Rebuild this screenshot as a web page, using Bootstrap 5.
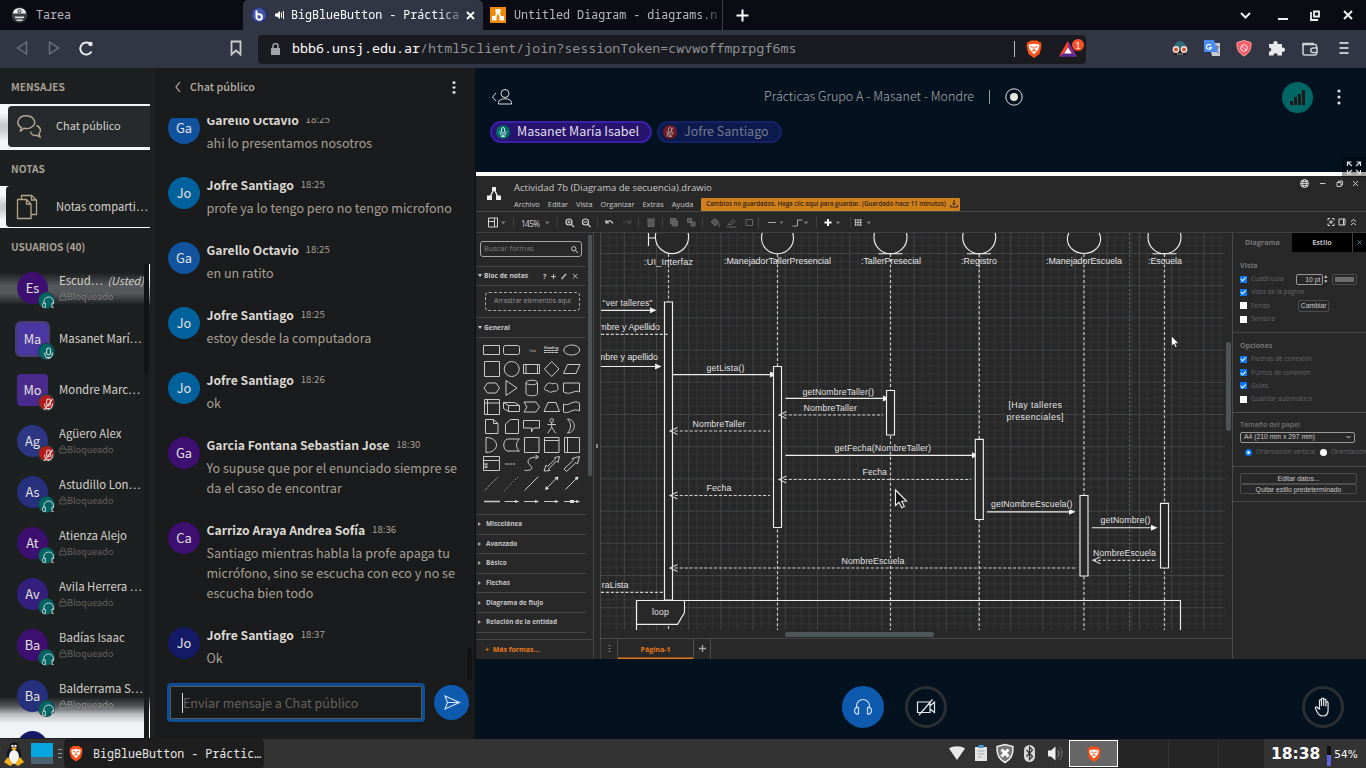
<!DOCTYPE html>
<html lang="es" data-bs-theme="dark">
<head>
<meta charset="utf-8">
<title>BigBlueButton - Prácticas Grupo A</title>
<link rel="stylesheet" href="https://cdn.jsdelivr.net/npm/bootstrap@5.3.0/dist/css/bootstrap.min.css">
<script src="https://cdn.jsdelivr.net/npm/bootstrap@5.3.0/dist/js/bootstrap.bundle.min.js"></script>
<style>
html,body{height:100%;overflow:hidden}
body{width:1366px;height:768px;background:#04111f;font-family:"Noto Sans CJK SC",sans-serif;color:#d5d2cc;font-size:13px;line-height:1.2}
svg{display:block;flex:none}
.mono{font-family:"Noto Sans Mono","DejaVu Sans Mono",monospace}
.tabstrip{height:30px;background:#0b0b14;font-size:11.7px;color:#b9bac0}
.tab-a{width:243px;padding-left:11px;gap:8px}
.tab-b{width:240px;background:#323543;color:#fff;padding-left:8px;border-radius:5px 5px 0 0}
.tab-c{width:239px;padding-left:7px}
.clip{overflow:hidden;white-space:nowrap}
.tabstrip span{margin-bottom:1px}
.fade-b{width:171px;-webkit-mask:linear-gradient(90deg,#000 86%,rgba(0,0,0,.2))}
.fade-c{width:206px;-webkit-mask:linear-gradient(90deg,#000 90%,rgba(0,0,0,.2))}
.navrow{height:38px;background:#323543}
.urlbox{width:828px;height:29px;margin-left:15px;background:#191b20;border-radius:4px;color:#8f9196;font-size:13.35px;padding:0 1px 0 13px}
.urlbox b{font-weight:400;color:#fff}
.urltxt{margin:0 0 2px 12px}
.content{height:671px}
.users{width:155px;background:#1d2021}
.sec{font-weight:700;font-size:10.2px;color:#a8a095;padding-left:11px;line-height:18px}
.glow{width:150px;background:linear-gradient(#f4f7fa 20%,#c9cbcd 45%,#c9cbcd 55%,#f4f7fa 82%)}
.pill{border-radius:4px 0 0 4px;font-size:11px;color:#d5d2cc}
.ulist{height:474px;width:150px;overflow:hidden}
.urow{height:51px;padding:8px 0 0 17px;gap:11px}
.av{width:31px;height:32px;border-radius:50%;font-size:12.8px;color:#e4e2de;flex:none}
.av.sq{border-radius:4px}
.dotb{position:absolute;left:22px;top:21px;width:15px;height:15px;border-radius:50%;background:#006464;box-shadow:0 0 0 1px #1c4248}
.dotb.rd{background:#b31c1c}
.nm{font-size:11.4px;line-height:17px;white-space:nowrap;margin-top:-7px}
.lk{font-size:9.1px;line-height:15px;color:#64615d}
.sbar{position:absolute;right:1px;top:0;width:5px;height:474px;background:#191b1c}
.sbar i{display:block;height:110px;background:#121314;border-radius:3px}
.edge{position:absolute;right:0;top:0;width:1px;height:474px;background:linear-gradient(#fff 0,#fff 3%,#777 7%,transparent 9%,transparent 91%,#fff 95%)}
.chat{width:320px;background:#1a1b1c}
.chead{height:50px;padding-top:10px}
.msgs{height:562px;overflow:hidden}
.mthumb{position:absolute;right:3px;top:530px;width:5px;height:34px;border-radius:3px;background:#111213}
.msg{padding:0 13px;gap:6.5px}
.msg .av{width:32px;margin-top:2px}
.who{font-weight:700;font-size:12.2px;line-height:20px;height:20px;color:#dcd9d3}
.who small{font-weight:400;font-size:9.7px;color:#a8a095;margin-left:4px;position:relative;top:-2px}
.txt{font-size:12.55px;line-height:20px;color:#a8a095;margin-top:3px;margin-bottom:22px;white-space:nowrap}
.minput{width:258px;height:39px;border:3px solid #0c4f97;border-radius:4px;box-shadow:inset 0 0 0 1px #5a5a58;color:#66625d;font-size:12.5px;padding-left:12px}
.send{width:35px;height:35px;border-radius:50%;background:#0d5aae}
.main{width:891px;background:#04111f;padding-left:1px}
.mtop{height:104px}
.talk{height:22px;border-radius:11px;border:2px solid #3b1fa8;background:#27146f;font-size:12.5px;line-height:16px;color:#e0dee8;padding:0 11px 0 4px;gap:7px}
.rnd{width:42px;height:42px;border-radius:50%;border:3px solid #2b2f32}
.dio{height:483px;background:#282829;font-family:"Open Sans",sans-serif;color:#c8c8c8;font-size:7.4px;line-height:12px}
.dio .ttl{height:36px;border-bottom:1px solid #444647}
.warn{background:#cf7f1c;color:#2f2113;width:259px;height:13px;font-size:6.15px;border-radius:1px;font-weight:600;padding-left:5px;white-space:nowrap}
.tools{height:21px;border-bottom:1px solid #3e4041}
.shapes{width:118px;border-right:1px solid #46494a}
.ln{border-top:1px solid #434546;width:110px}
.acc{height:19.6px;width:110px;border-top:1px solid #434546;font-weight:700;font-size:6.45px;color:#c4c4c4}
.acc:before{content:"";border:2.5px solid transparent;border-left:3px solid #aaa;border-right:0;margin:0 5px 0 2px}
.sbox{width:102px;height:16px;border:1px solid #a5a5a5;border-radius:3px;color:#7d7d7d;margin:8px 0 0 4px;padding:0 3px}
.rp{width:134px;border-left:1px solid #4a4e4f;color:#666667;font-size:6.5px}
.rp .r{height:13.35px;gap:4px;padding-left:7px}
.rp .h{font-weight:700;color:#747474;font-size:7px}
.ck{width:7px;height:7px;background:#fff;flex:none}
.ck.on{background:#0a78f0}
.ck.on:after{content:"";display:block;width:2.5px;height:4.5px;margin:.5px 0 0 2px;border:solid #fff;border-width:0 1px 1px 0;transform:rotate(45deg)}
.bt{border:1px solid #4c4c4c;border-radius:2px;color:#c8c8c8;font-family:"Liberation Sans",sans-serif;font-size:6.8px;text-align:center}
.mfoot{height:80px}
.task{height:29px;background:#333;font-size:11.7px;color:#e8e8e8}
</style>
</head>
<body>
<svg width="0" height="0" style="position:absolute">
<defs>
<symbol id="mic" viewBox="0 0 16 16"><g fill="none" stroke="currentColor" stroke-width="1.1"><rect x="6" y="2" width="4" height="7.5" rx="2"/><path d="M4 7v1.5a4 4 0 0 0 8 0V7M8 12.5V14M5.5 14h5"/></g></symbol>
<symbol id="mut" viewBox="0 0 16 16"><g fill="none" stroke="currentColor" stroke-width="1.1"><rect x="6" y="2" width="4" height="7.5" rx="2"/><path d="M4 7v1.5a4 4 0 0 0 8 0V7M8 12.5V14M5.5 14h5M3 14L12.500 2"/></g></symbol>
<symbol id="hp" viewBox="0 0 20 20"><g fill="none" stroke="currentColor" stroke-width="1.2"><path d="M3.500 11V9a6.500 6.500 0 0 1 13 0v2"/><path d="M5.500 10.500C2.500 10 1.500 12 1.500 13.500s1 4 4 3.500zM14.500 10.500c3-.5 4 1.500 4 3s-1 4-4 3.500z"/></g></symbol>
<symbol id="lock" viewBox="0 0 8 9"><g fill="none" stroke="currentColor" stroke-width=".9"><rect x=".8" y="4" width="6.200" height="4"/><path d="M2 4V2.800a1.900 1.900 0 0 1 3.800 0V4"/></g></symbol>
<symbol id="lion" viewBox="0 0 16 18"><path d="M4.500.5h7l1.500 1.500h1.500l1 3-.5 3.500L13.500 14 8 18 2.500 14 1 8.500.5 5 1.500 2H3z" fill="#fb5118"/><path d="M3.500 4l2 .3L8 3.700l2.500.6 2-.3 1 2-1.500 4-2 2L8 14.500 6 12 4 10 2.500 6z" fill="#fff"/><path d="M4.500 6.500l2.300.7M11.500 6.500l-2.300.7M8 7v3M6 11l2-1 2 1" stroke="#fb5118" stroke-width="1.100" fill="none"/></symbol>
<symbol id="dots" viewBox="0 0 4 16"><circle cx="2" cy="2" r="1.600"/><circle cx="2" cy="8" r="1.600"/><circle cx="2" cy="14" r="1.600"/></symbol>
</defs></svg>

<header class="tabstrip mono d-flex align-items-center">
  <div class="tab-a d-flex align-items-center">
    <svg width="17" height="16" viewBox="0 0 17 16"><circle cx="8.500" cy="8" r="7.800" fill="#3a3d42"/><path d="M2 6.500a6.500 5.500 0 0 1 13 0z" fill="#eee"/><circle cx="8.500" cy="4.200" r="2" fill="#444"/><circle cx="8.500" cy="4.200" r="1" fill="#eee"/><path d="M4 9.500h9v1.700H4zM5.500 12.500h6v1.500h-6z" fill="#ddd"/></svg>
    <span>Tarea</span>
  </div>
  <div class="tab-b h-100 d-flex align-items-center">
    <svg width="16" height="16" viewBox="0 0 16 16"><circle cx="8" cy="8" r="8" fill="#283274"/><circle cx="8" cy="8" r="6.800" fill="#4256a8"/><path d="M5.500 3.500v6.500a2.700 2.700 0 1 0 2.700-2.700H6" fill="none" stroke="#fff" stroke-width="2"/></svg>
    <svg class="ms-2" width="10" height="10" viewBox="0 0 10 10" fill="#fff"><path d="M0 3.500h2L5 1v8L2 6.500H0z"/><path d="M6.500 2.500v5M8.500 1v8" stroke="#fff"/></svg>
    <span class="clip fade-b" style="margin-left:6px">BigBlueButton - Práctica</span>
    <svg class="ms-1" width="9" height="9" viewBox="0 0 9 9"><path d="M1 1l7 7M8 1L1 8" stroke="#fff" stroke-width="1.800"/></svg>
  </div>
  <div class="tab-c d-flex align-items-center">
    <svg width="16" height="16" viewBox="0 0 16 16"><path fill="#f08705" d="M0 0h16v16H0z"/><path d="M8 5L4.500 11M8 5l3.500 6" stroke="#fff" stroke-width="1.500"/><path fill="#fff" d="M5.500 2h5v4h-5zM2 9h4.500v4.500H2zM9.500 9H14v4.500H9.500z"/></svg>
    <span class="clip fade-c ms-2">Untitled Diagram - diagrams.n</span>
  </div>
  <div class="border-start h-100" style="border-color:#3a3b44!important"></div>
  <svg style="margin-left:13px" width="13" height="13" viewBox="0 0 13 13"><path d="M6.500.5v12M.5 6.500h12" stroke="#fff" stroke-width="2"/></svg>
  <svg class="ms-auto" width="126" height="16" viewBox="1240 0 126 16"><g fill="none" stroke="#eee" stroke-width="2"><path d="M1241 6l4.500 4.500L1250 6M1278 12h10"/><path d="M1314 4.500h5v5h-5zM1311 5v8h7" stroke-width="1.800"/><path d="M1344 4l8 8M1352 4l-8 8"/></g></svg>
</header>

<nav class="navrow mono d-flex align-items-center">
  <svg width="243" height="38" viewBox="0 0 243 38"><g fill="none" stroke="#70727d" stroke-width="1.400"><path d="M26.500 12v12L17.500 18zM49.500 12v12l9-6z"/></g><path d="M91.500 21.500a6 6 0 1 1-2-8" fill="none" stroke="#eee" stroke-width="1.900"/><circle cx="90.500" cy="14" r="2.200" fill="#eee"/><path d="M231.500 11.500h9v13l-4.500-4-4.500 4z" fill="none" stroke="#ccc" stroke-width="1.800"/></svg>
  <div class="urlbox d-flex align-items-center">
    <svg width="9" height="12" viewBox="0 0 9 12"><path d="M0 5h9v7H0z" fill="#a2a4aa"/><path d="M2 5V3a2.500 2.500 0 0 1 5 0v2" fill="none" stroke="#a2a4aa" stroke-width="1.500"/></svg>
    <span class="clip urltxt"><b>bbb6.unsj.edu.ar</b>/html5client/join?sessionToken=cwvwoffmprpgf6ms</span>
    <svg class="ms-auto" width="72" height="24" viewBox="1013 36 72 24"><path d="M1014.500 40v16" stroke="#bbb"/><use href="#lion" x="1026" y="39" width="16" height="18"/><path d="M1068 40l9 15.500h-18z" fill="#8e2b86"/><path d="M1068 40l-9 15.500 4-2 5-8z" fill="#ff4724"/><path d="M1059 55.500h18l-4-3h-10z" fill="#5a2a94"/><path d="M1068 46.500l3.800 6h-7.600z" fill="#fff"/><circle cx="1078" cy="44" r="6" fill="#f4502b"/><text x="1078" y="47.500" font-size="9" text-anchor="middle" fill="#fff">1</text></svg>
  </div>
  <svg class="ms-auto" width="200" height="38" viewBox="1166 30 200 38">
    <path d="M1174 48a6 7 0 0 1 12 0v7h-12z" fill="#2e6b7c"/><path d="M1174 49h12v6h-12z" fill="#181c20"/><circle cx="1176" cy="49.500" r="3.400" fill="#f3e2dc"/><circle cx="1184" cy="49.500" r="3.400" fill="#f3e2dc"/><circle cx="1176" cy="49.500" r="2" fill="#d4553f"/><circle cx="1184" cy="49.500" r="2" fill="#d4553f"/><path d="M1177 54h6" stroke="#ddd" stroke-dasharray="1.500 .7"/>
    <path d="M1209 43h11v13h-8z" fill="#c9cbd0"/><path d="M1214 47h5M1216.500 45.500V47M1218 47c-.5 3-2 4-4 5M1215 48c1 3 2 4 4 5" stroke="#667" fill="none"/><path d="M1204 40h10l4 12h-14z" fill="#4a8af4"/><path d="M1211 45.500a2.500 2.500 0 1 0 .3 2h-2.300" stroke="#fff" stroke-width="1.200" fill="none"/>
    <path d="M1244 40.500l7 2c.5 7-2 11-7 13.500-5-2.500-7.500-6.500-7-13.500z" fill="#ef5e67" stroke="#f3a1a5"/><circle cx="1244" cy="48" r="3.300" fill="none" stroke="#fde" stroke-width="1"/><path d="M1242 46l4 4" stroke="#fde"/>
    <path d="M1269 44h4.500c-1-4 5-4 4 0h4.500v3.700c4-1 4 5 0 4V55.500h-4.500c.5-3-4-3-4 0H1269v-4c3 .5 3-4 0-4z" fill="#e9e9ec"/>
    <g fill="none" stroke="#d0d1d6" stroke-width="1.500"><rect x="1303" y="44.500" width="13.500" height="10.500" rx="1.500"/><path d="M1303 46.500v-3h11"/><path d="M1317 48h-4a2 2 0 0 0 0 4.500h4z" fill="#323543"/></g>
    <path d="M1339.500 43h9M1339.500 48h9M1339.500 53h9" stroke="#c4c5ca" stroke-width="2"/></svg>
</nav>

<div class="content d-flex">
<aside class="users d-flex flex-column">
  <div class="sec" style="margin-top:10px">MENSAJES</div>
  <div class="glow" style="height:46px;margin-top:8px;padding:2px 0 3px 8px">
    <div class="pill h-100 d-flex align-items-center" style="background:#262a2d;padding-left:8px">
      <svg width="26" height="26" viewBox="0 0 26 26" fill="none" stroke="#b5a893" stroke-width="1.400"><path d="M4 17.500l1.500-3.600C-1 10 2 1.800 10 1.800s11 7.200 6.500 10.700c-2.500 2.300-6 2.300-8.500 1.800z"/><path d="M20.500 11.500c5 2 4.500 6.500 2.500 8l1 3.500-3-1.700c-3 .7-6-.6-6.500-3.800"/></svg>
      <span style="margin:-2px 0 0 14px">Chat público</span></div>
  </div>
  <div class="sec" style="margin-top:10px">NOTAS</div>
  <div class="glow" style="height:42px;margin-top:8px;padding:0 0 1px 6px">
    <div class="pill h-100 d-flex align-items-center" style="background:#1d2021;padding-left:10px">
      <svg width="22" height="26" viewBox="0 0 22 26" fill="none" stroke="#b3a287" stroke-width="1.300"><path d="M1.500 5.500h9L15 10v14.500H1.500zM10.500 5.500V10H15"/><path d="M5.500 5V1.500h10L20.500 6v14.500H15M15.500 1.500V6h5" /></svg>
      <span style="margin-left:18px;font-size:11.200px;white-space:nowrap">Notas comparti…</span></div>
  </div>
  <div class="sec" style="margin-top:10px">USUARIOS (40)</div>
  <div class="ulist position-relative" style="margin-top:8px">
    <div class="urow d-flex" style="background:linear-gradient(transparent 18%,#55585a 42%,#55585a 58%,transparent 80%)"><div class="av position-relative d-flex align-items-center justify-content-center" style="background:#3c0f70">Es<span class="dotb"><svg width="15" height="15" viewBox="-4 -4 28 28"><use href="#hp"/></svg></span></div><div><div class="nm" style="margin-top:0">Escud… <em style="font-size:10.800px;margin-left:2px">(Usted)</em></div><div class="lk d-flex align-items-center" style="color:#7c7b79"><svg width="8" height="9"><use href="#lock"/></svg>Bloqueado</div></div></div>
    <div class="urow d-flex align-items-start"><div class="av sq position-relative d-flex align-items-center justify-content-center" style="background:#4b37a2;box-shadow:0 0 0 2px #483e70">Ma<span class="dotb"><svg width="15" height="15" viewBox="-3 -3 22 22"><use href="#mic"/></svg></span></div><div class="nm" style="margin-top:7px">Masanet Marí…</div></div>
    <div class="urow d-flex align-items-start"><div class="av sq position-relative d-flex align-items-center justify-content-center" style="background:#4b2a8e">Mo<span class="dotb rd"><svg width="15" height="15" viewBox="-3 -3 22 22"><use href="#mut"/></svg></span></div><div class="nm" style="margin-top:7px">Mondre Marc…</div></div>
    <div class="urow d-flex"><div class="av position-relative d-flex align-items-center justify-content-center" style="background:#2c3683">Ag<span class="dotb rd"><svg width="15" height="15" viewBox="-3 -3 22 22"><use href="#mut"/></svg></span></div><div><div class="nm" style="margin-top:0">Agüero Alex</div><div class="lk d-flex align-items-center"><svg width="8" height="9"><use href="#lock"/></svg>Bloqueado</div></div></div>
    <div class="urow d-flex"><div class="av position-relative d-flex align-items-center justify-content-center" style="background:#26307c">As<span class="dotb"><svg width="15" height="15" viewBox="-4 -4 28 28"><use href="#hp"/></svg></span></div><div><div class="nm" style="margin-top:0">Astudillo Lon…</div><div class="lk d-flex align-items-center"><svg width="8" height="9"><use href="#lock"/></svg>Bloqueado</div></div></div>
    <div class="urow d-flex"><div class="av position-relative d-flex align-items-center justify-content-center" style="background:#3c0f70">At<span class="dotb"><svg width="15" height="15" viewBox="-4 -4 28 28"><use href="#hp"/></svg></span></div><div><div class="nm" style="margin-top:0">Atienza Alejo</div><div class="lk d-flex align-items-center"><svg width="8" height="9"><use href="#lock"/></svg>Bloqueado</div></div></div>
    <div class="urow d-flex"><div class="av position-relative d-flex align-items-center justify-content-center" style="background:#34207c">Av<span class="dotb"><svg width="15" height="15" viewBox="-4 -4 28 28"><use href="#hp"/></svg></span></div><div><div class="nm" style="margin-top:0">Avila Herrera …</div><div class="lk d-flex align-items-center"><svg width="8" height="9"><use href="#lock"/></svg>Bloqueado</div></div></div>
    <div class="urow d-flex"><div class="av position-relative d-flex align-items-center justify-content-center" style="background:#3c0f70">Ba<span class="dotb"><svg width="15" height="15" viewBox="-4 -4 28 28"><use href="#hp"/></svg></span></div><div><div class="nm" style="margin-top:0">Badías Isaac</div><div class="lk d-flex align-items-center"><svg width="8" height="9"><use href="#lock"/></svg>Bloqueado</div></div></div>
    <div style="background:linear-gradient(transparent 38%,#55585a 52%,#b9bcbf 64%,#f1f4f7 78%);height:66px">
    <div class="urow d-flex"><div class="av position-relative d-flex align-items-center justify-content-center" style="background:#26307c">Ba<span class="dotb"><svg width="15" height="15" viewBox="-4 -4 28 28"><use href="#hp"/></svg></span></div><div><div class="nm" style="margin-top:0">Balderrama S…</div><div class="lk d-flex align-items-center" style="color:#8f8e8c"><svg width="8" height="9"><use href="#lock"/></svg>Bloqueado</div></div></div>
    <div class="urow d-flex pt-2"><div class="av" style="background:#141a66"></div></div></div>
    <div class="sbar"><i></i></div><div class="edge"></div>
  </div>
</aside>

<section class="chat d-flex flex-column">
  <div class="chead d-flex align-items-start">
    <svg style="margin:3px 0 0 20px" width="6" height="12" viewBox="0 0 6 12"><path d="M5 1L1 6l4 5" fill="none" stroke="#b8b4ac" stroke-width="1.200"/></svg>
    <span style="margin:-1px 0 0 9px;font-weight:500;font-size:10.800px;line-height:18px;color:#b8b0a5">Chat público</span>
    <svg class="ms-auto" style="margin:3px 19.500px 0 0" width="4" height="13" viewBox="0 0 4 16" fill="#ddd" preserveAspectRatio="none"><use href="#dots"/></svg>
  </div>
  <div class="msgs position-relative"><div style="margin-top:-8px">
    <div class="msg d-flex"><div class="av d-flex align-items-center justify-content-center" style="background:#11539f">Ga</div><div><div class="who">Garello Octavio <small>18:25</small></div><div class="txt">ahi lo presentamos nosotros</div></div></div>
    <div class="msg d-flex"><div class="av d-flex align-items-center justify-content-center" style="background:#01619d">Jo</div><div><div class="who">Jofre Santiago <small>18:25</small></div><div class="txt">profe ya lo tengo pero no tengo microfono</div></div></div>
    <div class="msg d-flex"><div class="av d-flex align-items-center justify-content-center" style="background:#11539f">Ga</div><div><div class="who">Garello Octavio <small>18:25</small></div><div class="txt">en un ratito</div></div></div>
    <div class="msg d-flex"><div class="av d-flex align-items-center justify-content-center" style="background:#01619d">Jo</div><div><div class="who">Jofre Santiago <small>18:25</small></div><div class="txt">estoy desde la computadora</div></div></div>
    <div class="msg d-flex"><div class="av d-flex align-items-center justify-content-center" style="background:#01619d">Jo</div><div><div class="who">Jofre Santiago <small>18:26</small></div><div class="txt">ok</div></div></div>
    <div class="msg d-flex"><div class="av d-flex align-items-center justify-content-center" style="background:#3c0f70">Ga</div><div><div class="who">Garcia Fontana Sebastian Jose <small>18:30</small></div><div class="txt">Yo supuse que por el enunciado siempre se<br>da el caso de encontrar</div></div></div>
    <div class="msg d-flex"><div class="av d-flex align-items-center justify-content-center" style="background:#3c0f70">Ca</div><div><div class="who">Carrizo Araya Andrea Sofía <small>18:36</small></div><div class="txt">Santiago mientras habla la profe apaga tu<br>micrófono, sino se escucha con eco y no se<br>escucha bien todo</div></div></div>
    <div class="msg d-flex"><div class="av d-flex align-items-center justify-content-center" style="background:#141a66">Jo</div><div><div class="who">Jofre Santiago <small>18:37</small></div><div class="txt mb-0">Ok</div></div></div>
  </div><div class="mthumb"></div></div>
  <div class="d-flex align-items-center" style="margin:3px 0 0 12px;gap:9px">
    <div class="minput d-flex align-items-center"><span style="border-left:1px solid #ddd;line-height:20px">Enviar mensaje a Chat público</span></div>
    <div class="send d-flex align-items-center justify-content-center"><svg width="18" height="18" viewBox="0 0 18 18"><path d="M2 2l14.500 6.500L2 15l2.500-6.500zM4.500 8.500h12" fill="none" stroke="#d8e6f5" stroke-width="1.100"/></svg></div>
  </div>
</section>

<main class="main">
  <div class="mtop position-relative">
    <div class="d-flex align-items-center" style="height:50px;padding-top:7px">
      <svg style="margin-left:15px" width="22" height="18" viewBox="0 0 22 18" fill="none" stroke="#dcdcda"><path d="M5 5L1.500 9 5 13"/><circle cx="14" cy="5.500" r="4"/><path d="M7.500 16v-1.500c0-5 13-5 13 0V16z"/></svg>
      <span style="margin:-1px 0 0 251px;font-size:12.550px;font-weight:300;color:#a9abad;white-space:nowrap">Prácticas Grupo A - Masanet - Mondre</span>
      <span style="margin-left:15px;height:14px;width:1px;background:#999"></span>
      <svg style="margin-left:15px" width="18" height="18" viewBox="0 0 18 18"><circle cx="9" cy="9" r="8.200" fill="none" stroke="#ddd"/><circle cx="9" cy="9" r="4" fill="#e8e4de"/></svg>
      <svg class="ms-auto" style="margin-top:1px" width="31" height="31" viewBox="0 0 31 31"><circle cx="15.500" cy="15.500" r="15.500" fill="#006666"/><path d="M8 19h3v4H8zM12 15h3v8h-3zM16 12h3v11h-3zM20 8h3v15h-3z" fill="#1b1b1b"/></svg>
      <svg style="margin:0 25.500px 0 23.500px" width="4" height="16" fill="#ddd"><use href="#dots"/></svg>
    </div>
    <div class="d-flex" style="margin:3px 0 0 14px;gap:5px">
      <div class="talk d-flex align-items-center"><svg width="14" height="14" viewBox="0 0 14 14" color="#fff"><circle cx="7" cy="7" r="7" fill="#006b69"/><use href="#mic" x="1" y="1" width="12" height="12"/></svg><span style="margin-top:-2px">Masanet María Isabel</span></div>
      <div class="talk d-flex align-items-center" style="border-color:#142368;background:#0c1b4b;color:#747a91"><svg width="14" height="14" viewBox="0 0 14 14" color="#aaa"><circle cx="7" cy="7" r="7" fill="#6e1a22"/><use href="#mut" x="1" y="1" width="12" height="12"/></svg><span style="margin-top:-2px">Jofre Santiago</span></div>
    </div>
    <svg style="position:absolute;right:0;top:89px;z-index:2" width="24" height="20" viewBox="0 0 24 20"><path d="M0 0h24v20H0z" fill="#000" fill-opacity=".35"/><g fill="none" stroke="#ddd" stroke-width="1.200"><path d="M10 9L5.500 5M5.500 9V5h4M14 9l4.500-4M14.500 5h4v4M10 13l-4.500 4M5.500 13v4h4M14 13l4.500 4M18.500 13v4h-4"/></g></svg>
  </div>
  <div style="height:4px;background:#fdfdfc"></div>
  <div class="dio">
    <div class="ttl d-flex">
      <svg style="margin:11px 13px 0 11px" width="14" height="13" viewBox="0 0 14 13" fill="#eee"><path d="M5 0h4v4H5zM0 8.500h5V13H0zM9 8.500h5V13H9z"/><path d="M6.500 3L3 10M7.500 3L11 10" stroke="#eee" stroke-width="1.400"/></svg>
      <div class="flex-grow-1"><div style="font-size:9.500px;line-height:13px;margin-top:5px">Actividad 7b (Diagrama de secuencia).drawio</div>
      <div class="d-flex align-items-center" style="gap:8px;margin-top:3px;height:14px"><span>Archivo</span><span>Editar</span><span>Vista</span><span>Organizar</span><span>Extras</span><span>Ayuda</span><span class="warn d-flex align-items-center">Cambios no guardados. Haga clic aquí para guardar. (Guardado hace 11 minutos)<svg class="ms-1" width="8" height="8" viewBox="0 0 8 8" fill="none" stroke="#2f2113"><path d="M4 0v5M2.500 3.500L4 5l1.500-1.500M.5 5v2h7V5"/></svg></span></div></div>
      <svg width="66" height="14" viewBox="1300 176 66 14" fill="none" stroke="#ddd" stroke-width=".9"><circle cx="1304.500" cy="183.500" r="4"/><ellipse cx="1304.500" cy="183.500" rx="1.800" ry="4"/><path d="M1300.500 183.500h8M1301 181.500h7M1301 185.500h7M1320 183.500h5.500M1337 182.500h4v4h-4zM1338.500 182.500v-1.500h4v4h-1.500M1353 181l5 5M1358 181l-5 5"/></svg>
    </div>
    <div class="tools"><svg width="890" height="20" viewBox="476 212 890 20" font-family="Open Sans" fill="none" stroke="#d5d5d5">
      <path d="M488.500 218h9v9h-9zM494.500 218v9M488.500 221.500h6"/><g fill="#777" stroke="none"><path d="M501 221.500h4.500l-2.200 3zM545 221.500h4.500l-2.200 3zM779.500 221.500h4l-2 2.600zM803.500 221.500h5l-2.500 3zM835.500 221.500h5l-2.500 3zM866.500 221.500h4.500l-2.200 3z"/></g>
      <text x="521" y="226.500" font-size="8.200" fill="#d5d5d5" stroke="none" textLength="19">145%</text>
      <path d="M513.500 217v11M557 217v11M597.500 217v11M638.500 217v11M662.500 217v11M702.500 217v11M758.500 217v11M816.500 217v11M850.500 217v11" stroke="#404142"/>
      <g stroke-width="1.200"><circle cx="569" cy="222" r="3"/><path d="M571.500 224.500l2.500 2.500M567.500 222h3M569 220.500v3"/><circle cx="585.500" cy="222" r="3"/><path d="M588 224.500l2.500 2.500M584 222h3"/><path d="M606.500 222.500c2-2.500 5-2 6.500 1M606 220v3h3"/></g>
      <g stroke="#666"><path d="M630 222.500c-2-2.500-5-2-6.500 1M630.500 220v3h-3" stroke="#555"/><path d="M648 220h6v6.500h-6zM647 219h8" fill="#555"/><path d="M670.500 218.500h5.500v5.500h-5.500zM672.500 221h5v5h-5z" fill="#5a5a5a"/><path d="M687.500 218.500h4v4h-4zM691 222h4v4h-4z" fill="#555"/><path d="M711 222l4-3.500 4 4-4 3.500zM719 224v3" fill="#555"/><path d="M728 224.500l5-5 2 2-4 3zM726.500 227h10M746 219.500h6.500v6h-6.500z"/></g>
      <path d="M768 222.500h8M792.500 226h5v-6h5" stroke="#aaa"/><path d="M828 219v7M824.500 222.500h7" stroke="#fff" stroke-width="2"/>
      <path d="M855.500 219v7M858 219v7M860.500 219v7M854.500 220h7.500M854.500 222.500h7.500M854.500 225h7.500" stroke="#ccc" stroke-width=".8"/>
      <path d="M1328 220.500v-2h2M1332 218.500h2v2M1334 223.500v2h-2M1330 225.500h-2v-2M1330 221h2v2h-2zM1339 219h6v6h-6zM1343.500 219v6M1351 221.500l2.500-2 2.500 2M1351 225l2.500-2 2.500 2"/></svg></div>
    <div class="d-flex" style="height:426px">
      <div class="shapes d-flex flex-column">
        <div class="d-flex"><div style="height:105px"><div class="sbox d-flex align-items-center justify-content-between"><span style="margin-top:-2px">Buscar formas</span><svg width="7" height="7" viewBox="0 0 7 7" fill="none" stroke="#ccc"><circle cx="2.800" cy="2.800" r="2.200"/><path d="M4.500 4.500L7 7"/></svg></div>
        <div class="ln" style="margin-top:9px"></div>
        <div class="d-flex align-items-center" style="height:18px;width:110px;font-weight:700;font-size:6.600px"><svg width="8" height="4" viewBox="0 0 8 4"><path d="M2 0h4L4 3z" fill="#ccc"/></svg>Bloc de notas<svg class="ms-auto" style="margin-right:6px" width="37" height="8" viewBox="0 0 37 8" fill="none" stroke="#bbb"><text x="0" y="7" font-size="7" fill="#ccc" stroke="none">?</text><path d="M8 4.500h5M10.500 2v5"/><path d="M18.500 7l4.500-5" stroke-width="1.500"/><path d="M30 2l4.500 4.500M34.500 2L30 6.500"/></svg></div>
        <div class="ln"></div>
        <div class="text-center" style="margin:6px 0 6px 9px;width:95px;height:19px;border:1px dashed #aaa;border-radius:4px;line-height:16px;font-size:6.600px;color:#999">Arrastrar elementos aquí</div>
        <div class="ln"></div>
        <div class="d-flex align-items-center" style="height:19px;font-weight:700;font-size:6.600px"><svg width="8" height="4" viewBox="0 0 8 4"><path d="M2 0h4L4 3z" fill="#ccc"/></svg>General</div>
        <div class="ln"></div></div><span style="width:4px;height:241px;margin:2px 0 -140px 2px;background:#4a5254;border-radius:1px"></span></div>
        <svg width="110" height="176" viewBox="476 338 110 176" fill="none" stroke="#c9c9c9" stroke-width="1">
          <path d="M483.500 345.500h16v9h-16z"/><rect x="503.500" y="345.500" width="16" height="9" rx="2"/><text x="529" y="352" font-size="3.500" fill="#ccc" stroke="none">Text</text><text x="544" y="349" font-size="3.500" fill="#ccc" stroke="none" font-weight="700">Heading</text><path d="M544 350.500h14M544 352.500h14" stroke-dasharray="3 .6"/><ellipse cx="571.700" cy="350" rx="8" ry="5"/>
          <path d="M484.500 361.500h15v15h-15z"/><circle cx="511.700" cy="369" r="7.500"/><path d="M523.500 364.500h16v9h-16zM526 364.500v9M537.500 364.500v9M551.700 361.500l7.300 7.500-7.300 7.500-7.300-7.500zM567.500 364.500h12.500l-4 9h-12.500z"/>
          <path d="M487.500 383h8.500l3.500 5-3.500 5h-8.500l-3.500-5zM506 380.500l11 7.500-11 7.500z"/><path d="M526 382.500v11c0 3 11.500 3 11.500 0v-11c0-3-11.500-3-11.500 0c0 3 11.500 3 11.500 0"/><path d="M546 386c0-3 5-4 6-2 3-1.500 7 0 5.500 3 2 2-1 5-3.500 4-3 2-6 1-6-.5-4 1-4.500-3-2-4.500z"/><path d="M563.500 383h16v9c-5-3-9 4-16 0z"/>
          <path d="M484.500 399.500h15v15h-15zM487.500 399.500v15M484.500 403h15M503.500 402.500h11l5 3v6h-11l-5-3zM503.500 402.500l5 3h11M508.500 405.500v6M524 402h12l3.500 5-3.500 5h-12l3-5zM548 402.500h8l3.500 9H544zM563.500 404c5 3 10-5 16-1v8c-6-4-11 4-16 1z"/>
          <path d="M485.500 419.500h8l4.500 4v10h-12.500zM493.500 419.500v4h4.500M505.500 424l5-4.500h8v14h-13zM523.500 420.500h16v7.500h-6l-2 4v-4h-8z"/><circle cx="551.700" cy="420.500" r="1.800"/><path d="M551.700 422.300v5M547.500 424.500h8.500M551.700 427.300l-4 6M551.700 427.300l4 6M567.500 419c9 0 9 14 0 14 4-4 4-10 0-14z"/>
          <path d="M486 437.500c14 0 14 15 0 15zM507.500 439h12c-4 3-4 9 0 12h-12c-5-1-5-11 0-12zM524.500 437.500h14.500v15h-14.500zM544.500 437.500h14.500v15h-14.500zM544.500 440.500h14.500M564.500 437.500h15v15h-15zM567.500 437.500v15"/>
          <path d="M483.500 456.500h16v14h-16zM483.500 460.500h16M486 463.500v5M484 464h4M484 467h4"/><path d="M505 464h10" stroke-dasharray="2 .7"/><path d="M524.500 470.500c10 0 8-3 4-7-2-4 2-6.500 9-6.500M535.500 455l3 2-3 2M544 471l2-6 1.500 1.500 8-7.500-1-1.500 5-1-1.500 6-1.500-1.500-8 8 1.500 1.500zM564 469l9.500-9-1.500-1.500 7.500-2-2 7.500-1.500-1.500-9.500 9z"/>
          <path d="M484.500 490.500l14-14" stroke-dasharray="4 .5" stroke="#888"/><path d="M504.500 490.500l14-14" stroke-dasharray="1 2"/><path d="M524.500 490.500l14-14M546 489l11-11.500M565.500 489.500l12-12"/><path d="M545 490l1-4 3 3zM558.500 476.500l-1 4-3-3zM578.500 476.500l-1 4-3-3z" fill="#ddd" stroke="none"/>
          <path d="M484 501.500h16" stroke-width="1.500"/><path d="M504.500 501.500h14M524 501.500h14M544 501.500h14M564 501.500h14"/><path d="M515 500l4 1.500-4 1.500zM535 500l4 1.500-4 1.500zM555 500l4 1.500-4 1.500zM576 500l4 1.500-4 1.500zM570 500h4v3h-4z" fill="#ddd" stroke="none"/>
        </svg>
        <div class="acc d-flex align-items-center">Miscelánea</div><div class="acc d-flex align-items-center">Avanzado</div><div class="acc d-flex align-items-center">Básico</div><div class="acc d-flex align-items-center">Flechas</div><div class="acc d-flex align-items-center">Diagrama de flujo</div><div class="acc d-flex align-items-center">Relación de la entidad</div><div class="ln"></div>
        <div class="mt-auto d-flex align-items-center" style="height:20px;border-top:1px solid #434546;color:#e8791a;font-weight:700;font-size:7px;padding-left:9px">+&nbsp; Más formas...</div>
      </div>
      <div class="d-flex align-items-center justify-content-center" style="width:7px;border-right:1px solid #46494a"><span style="width:2px;height:4px;background:#888"></span></div>
      <div class="d-flex flex-column" style="width:631px">
        <div class="d-flex" style="height:397px">
        <svg width="624" height="397" viewBox="601 233 624 397" font-family="Liberation Sans" font-size="8.900" fill="none" stroke="#ededed" stroke-width="1.150">
          <defs><pattern id="g" x="656" y="253" width="32.200" height="32.200" patternUnits="userSpaceOnUse"><path d="M8.550 0v32.200M16.600 0v32.200M24.650 0v32.200M0 8.550h32.200M0 16.600h32.200M0 24.650h32.200" stroke="#333435" stroke-width="1"/><path d="M.5 0v32.200M0 .5h32.200" stroke="#414344" stroke-width="1"/></pattern>
          <path id="fa" d="M0-3l6.500 3L0 3z" fill="#f2f2f2" stroke="none"/><path id="oa" d="M7.500-3.500L0 0l7.500 3.500" /></defs>
          <path d="M601 233h624v397H601z" fill="url(#g)" stroke="none"/>
          <path d="M1129.500 233v397" stroke="#6b6b6b" stroke-width=".9" stroke-dasharray="2.500 1.800"/>
          <g fill="#282829"><circle cx="672" cy="237" r="16.600"/><ellipse cx="777.500" cy="238" rx="16" ry="15.700"/><circle cx="890.500" cy="237.200" r="16.500"/><circle cx="979.200" cy="237.200" r="16.500"/><ellipse cx="1084" cy="239" rx="16.600" ry="14.500"/><circle cx="1164.500" cy="237.200" r="16.500"/></g>
          <path d="M648.500 233v13M648.500 238h7M878.500 253.700h24M967 253.700h24M1152.500 253.700h24"/>
          <path d="M668.500 254v48M777.500 254v376M890.500 254v376M979.300 254v376M1084 254v376M1164.500 254v376M668.500 626v4" stroke-dasharray="3 2.200" stroke="#c8c8c8" stroke-width="1.200"/>
          <path d="M601 310.300h50M601 366.500h55M672.500 374.600h100M785.500 398.400h100M785.500 455.300h188M987 511.800h84M1092 527.700h60"/>
          <use href="#fa" x="650" y="310.300"/><use href="#fa" x="655" y="366.500"/><use href="#fa" x="770" y="374.600"/><use href="#fa" x="883" y="398.400"/><use href="#fa" x="972" y="455.300"/><use href="#fa" x="1069" y="511.800"/><use href="#fa" x="1151" y="527.700"/>
          <g fill="#282829"><path d="M664.500 302h8v298h-8zM773.500 366.500h8v161h-8zM886.500 390.500h8v44.500h-8zM975.300 439.300h8v80.200h-8zM1080 495.500h8V576h-8zM1160.500 503.300h8V568h-8z"/><path d="M636.500 600.500h48v12l-7 11.800h-41z"/></g>
          <g stroke="#cfcfcf"><path d="M601 334.300h67M779 415h104M670 431h100M779 479.500h192M670 495.500h100M1093 560.300h64M670 568h407M601 592.400h62" stroke-dasharray="3 1.900"/>
          <use href="#oa" x="779" y="415"/><use href="#oa" x="670" y="431"/><use href="#oa" x="779" y="479.500"/><use href="#oa" x="670" y="495.500"/><use href="#oa" x="1093" y="560.300"/><use href="#oa" x="670" y="568"/></g>
          <path d="M636.500 630v-29.500H1180.500V630"/>
          <g fill="#e6e6e6" stroke="none"><text x="644" y="265" textLength="49">:UI_Interfaz</text><text x="724" y="263.500" textLength="107">:ManejadorTallerPresencial</text><text x="861" y="263.500" textLength="60">:TallerPresecial</text><text x="961" y="263.500" textLength="36">:Registro</text><text x="1046" y="263.500" textLength="76">:ManejadorEscuela</text><text x="1148" y="263.500" textLength="34">:Escuela</text></g>
          <g fill="#e6e6e6" stroke="#282829" stroke-width="1.500" paint-order="stroke">
          <text x="602.500" y="306" textLength="50">"ver talleres"</text><text x="660" y="330" text-anchor="end">mbre y Apellido</text><text x="658" y="360" text-anchor="end">mbre y apellido</text>
          <text x="706.500" y="370.500" textLength="38">getLista()</text><text x="802.500" y="394.500" textLength="71.500">getNombreTaller()</text><text x="803.500" y="410.500" textLength="53.500">NombreTaller</text><text x="692.500" y="426.500" textLength="53">NombreTaller</text><text x="834.500" y="451" textLength="96.500">getFecha(NombreTaller)</text><text x="862.500" y="474.500" textLength="24.500">Fecha</text><text x="706.500" y="491" textLength="25">Fecha</text><text x="991" y="507" textLength="81.500">getNombreEscuela()</text><text x="1100.500" y="523" textLength="50">getNombre()</text><text x="1093" y="555.500" textLength="63">NombreEscuela</text><text x="841.500" y="564" textLength="63">NombreEscuela</text><text x="628.500" y="587.500" text-anchor="end">raLista</text><text x="652" y="615" textLength="17">loop</text><text x="1008.500" y="408" textLength="53.500">[Hay talleres</text><text x="1006.500" y="420" textLength="57">presenciales]</text></g>
          <path d="M895.500 490v15.500l3.500-3.200 2.800 5.500 2.500-1.200-2.600-5.300 4.800-.3z" fill="#111" stroke="#eee"/>
          <path d="M1171.500 336v10l2.300-2 1.700 3.500 1.500-.7-1.600-3.400 3.100-.2z" fill="#fff" stroke="#111" stroke-width=".5"/>
        </svg>
        <span style="width:5px;height:89px;margin:109px 0 0 1px;background:#4b5556;border-radius:2px"></span></div>
        <div style="height:8px;padding:2px 0 0 184px"><div style="width:149px;height:5px;background:#4e5758;border-radius:2px"></div></div>
        <div class="d-flex" style="height:21px;border-top:1px solid #434546"><span style="width:16px;text-align:center;line-height:20px;font-size:9px">⋮</span><span style="width:77px;height:20px;text-align:center;line-height:22px;font-weight:700;font-size:7px;color:#e8791a;border:solid #4a4c4d;border-width:0 1px;box-shadow:inset 0 -1.500px #e8791a">Página-1</span><span class="d-flex justify-content-center" style="width:17px;padding-top:6px;border-right:1px solid #4a4c4d"><svg width="7" height="7"><path d="M3.500 0v7M0 3.500h7" stroke="#aaa" stroke-width="1.300"/></svg></span></div>
      </div>
      <div class="rp">
        <div class="d-flex" style="height:19px;line-height:19px;font-weight:700;font-size:7.200px;text-align:center"><span style="width:59px;color:#777">Diagrama</span><span style="width:60px;background:#000;color:#bbb">Estilo</span><span class="d-flex align-items-center justify-content-center" style="width:14px;background:#000;border-left:1px solid #444"><svg width="5" height="5"><path d="M.5.5l4 4M4.500.5l-4 4" stroke="#5b8aa0"/></svg></span></div>
        <div style="padding-top:7px">
        <div class="r h d-flex align-items-center">Vista</div>
        <div class="r d-flex align-items-center"><span class="ck on"></span>Cuadrícula<span class="bt" style="width:27px;height:11px;line-height:10px;border-color:#999;text-align:right;margin-left:9px;padding-right:2px">10 pt</span><span style="margin:0 0 0 -4px;line-height:5px;color:#ccc;font-size:5px">▲<br>▼</span><span class="bt" style="width:25px;height:11px;padding:2px"><span class="d-block" style="height:5px;background:#6c6c6e"></span></span></div>
        <div class="r d-flex align-items-center"><span class="ck on"></span>Vista de la página</div>
        <div class="r d-flex align-items-center"><span class="ck"></span>Fondo<span class="bt" style="width:31px;height:12px;line-height:10px;margin-left:24px">Cambiar</span></div>
        <div class="r d-flex align-items-center"><span class="ck"></span>Sombra</div>
        <div style="border-top:1px solid #434546;margin:6.500px 0 6px"></div>
        <div class="r h d-flex align-items-center">Opciones</div>
        <div class="r d-flex align-items-center"><span class="ck on"></span>Flechas de conexión</div>
        <div class="r d-flex align-items-center"><span class="ck on"></span>Puntos de conexión</div>
        <div class="r d-flex align-items-center"><span class="ck on"></span>Guías</div>
        <div class="r d-flex align-items-center"><span class="ck"></span>Guardar automático</div>
        <div style="border-top:1px solid #4b4d4e;margin:6.500px 0 5px"></div>
        <div class="r h d-flex align-items-center" style="font-weight:600">Tamaño del papel</div>
        <div class="bt d-flex justify-content-between align-items-center" style="margin-left:7px;width:115px;height:11px;border-color:#999;padding:0 3px">A4 (210 mm x 297 mm)<svg width="5" height="4"><path d="M.5 1l2 2 2-2" stroke="#ccc" fill="none"/></svg></div>
        <div class="d-flex align-items-center clip" style="height:19px;padding-left:12px;width:133px"><span class="ck rounded-circle" style="border:2px solid #0a78f0"></span><span style="width:58px;flex:none;margin:0 2px 0 4px">Orientación vertical</span><span class="ck rounded-circle ms-1 me-1"></span>Orientación</div>
        <div style="border-top:1px solid #4b4d4e;margin:4px 0 6.500px"></div>
        <div class="bt" style="margin-left:7px;width:117px;height:10.500px;line-height:9px">Editar datos...</div>
        <div class="bt" style="margin-left:7px;width:117px;height:10.500px;line-height:9px">Quitar estilo predeterminado</div>
        <div style="border-top:1px solid #434546;margin-top:7px"></div>
        </div>
      </div>
    </div>
  </div>
  <div class="mfoot d-flex align-items-center" style="padding-top:16px">
    <div class="rnd d-flex align-items-center justify-content-center" style="margin-left:366px;background:#0d5aae;border-color:#0d5aae;color:#cfe0f2"><svg width="20" height="20"><use href="#hp"/></svg></div>
    <div class="rnd d-flex align-items-center justify-content-center" style="margin-left:21px"><svg width="20" height="18" viewBox="0 0 20 18" fill="none" stroke="#e8e8e8" stroke-width="1.200"><path d="M1.500 4H14v10.500H1.500zM14 8l4.500-4v10.500L14 11M3 17L16.500 1.500"/></svg></div>
    <div class="rnd d-flex align-items-center justify-content-center ms-auto" style="margin-right:22px"><svg width="18" height="20" viewBox="0 0 18 20" fill="none" stroke="#e8e8e8" stroke-width="1.200"><path d="M5.500 12V4c0-1.800 2-1.800 2 0v5V2.500c0-1.800 2.200-1.800 2.200 0V9 3.500c0-1.800 2.200-1.800 2.200 0V9.500 6c0-1.800 2.200-1.800 2.200 0v7c0 4-2 6-5 6-4 0-5-2-7.600-7.500-.7-1.600 1.200-2 2-.8z"/></svg></div>
  </div>
</main>
</div>

<footer class="task mono d-flex align-items-center">
  <svg style="margin-left:4px" width="59" height="29" viewBox="4 739 59 29"><ellipse cx="14" cy="755" rx="7.500" ry="9" fill="#15171a"/><circle cx="14" cy="746.500" r="4.300" fill="#15171a"/><ellipse cx="14" cy="757" rx="5" ry="7" fill="#f4f4f4"/><circle cx="12.500" cy="746" r="1.200" fill="#fff"/><circle cx="15.500" cy="746" r="1.200" fill="#fff"/><path d="M11 748.500l3-1.500 3 1.500-3 2z" fill="#f5b81c"/><path d="M4 762l4-5 5 7-3 2zM24 762l-4-5-5 7 3 2z" fill="#f2b01e"/><path d="M31 743h22v14H31z" fill="#06a5df"/><path d="M31 757h22v7H31z" fill="#4b6270"/><path d="M58 749.500h4M58 753.500h4M58 757.500h4" stroke="#999"/></svg>
  <div class="h-100 d-flex align-items-center rounded-1 clip" style="width:200px;margin-left:1px;background:#1e1e1e;padding-left:5px"><svg width="14" height="17"><use href="#lion"/></svg><span style="margin-left:10px">BigBlueButton - Práctic…</span></div>
  <svg class="ms-auto" width="120" height="29" viewBox="948 739 120 29"><path d="M949 748.500c4-3 12-3 16 0L957 760z" fill="#e8e8e8"/><path d="M975 747h12v14h-12z" fill="#e4e4e4"/><path d="M978.500 745h5v3h-5z" fill="#3d9be0"/><path d="M977.500 751h7M977.500 754h7M977.500 757h4" stroke="#aaa"/><path d="M1005 744.500l8 2c.5 8-2 13-8 16-6-3-8.500-8-8-16z" fill="#777" stroke="#eee" stroke-width="1.500"/><path d="M1001.500 749.500l7 7M1008.500 749.500l-7 7" stroke="#fff" stroke-width="3"/><rect x="1024" y="745" width="11" height="17" rx="5.500" fill="#d8d8d8"/><path d="M1026.500 750l6 6.500-3 3v-12.500l3 3-6 6.500" fill="none" stroke="#333" stroke-width="1.200"/><path d="M1048 750.500h3l4.500-4v14l-4.500-4h-3z" fill="#eee"/><path d="M1057.500 750c2 2 2 5 0 7.500" stroke="#aaa" fill="none"/><path d="M1059.500 747c3.500 4 3.500 9 0 13" stroke="#777" fill="none"/></svg>
  <div class="d-flex h-100" style="background:#252525;width:195px;margin-left:1px"><div class="d-flex align-items-center justify-content-center" style="width:49px;height:27px;margin-top:1px;border:1px solid #fff;background:#666"><svg width="14" height="16"><use href="#lion"/></svg></div><span style="width:51px;border-right:1px solid #333"></span><span style="width:50px;border-right:1px solid #333"></span></div>
  <div style="width:102px;padding:2px 0 0 7px;font-family:'DejaVu Sans';font-weight:700;font-size:15.500px;color:#fff" class="d-flex align-items-center">18:38<span style="width:4px;height:20px;margin:2px 3px 0 7px;background:linear-gradient(#111 45%,#5d62e0 45%)"></span><span style="font-weight:400;font-size:10.500px">54%</span></div>
</footer>
</body>
</html>
